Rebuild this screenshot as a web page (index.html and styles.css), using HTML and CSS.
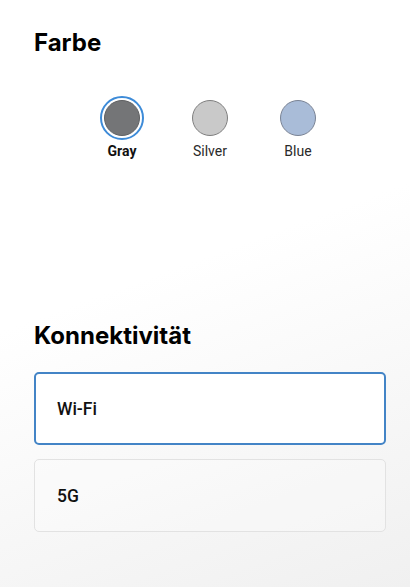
FILE: index.html
```html
<!DOCTYPE html>
<html lang="de">
<head>
<meta charset="utf-8">
<title>Farbe & Konnektivität</title>
<link rel="stylesheet" href="styles.css">
</head>
<body>
<main class="page">
  <section class="section color-section">
    <h2 class="title">Farbe</h2>
    <div class="swatches">
      <div class="swatch is-selected">
        <span class="ring"><span class="dot dot-gray"></span></span>
        <span class="label">Gray</span>
      </div>
      <div class="swatch">
        <span class="ring"><span class="dot dot-silver"></span></span>
        <span class="label">Silver</span>
      </div>
      <div class="swatch">
        <span class="ring"><span class="dot dot-blue"></span></span>
        <span class="label">Blue</span>
      </div>
    </div>
  </section>
  <section class="section conn-section">
    <h2 class="title">Konnektivität</h2>
    <div class="options">
      <div class="option is-selected">Wi-Fi</div>
      <div class="option">5G</div>
    </div>
  </section>
</main>
</body>
</html>
```
FILE: styles.css
```css
html, body {
  margin: 0;
  height: 100%;
}
body {
  background: linear-gradient(160deg, #ffffff 0%, #ffffff 45%, #f0f0f0 100%);
  font-family: Inter, "Noto Sans", sans-serif;
  color: #000;
}
.page {
  padding: 28px 24px 0 34px;
}
.title {
  margin: 0;
  font-size: 24px;
  line-height: 29px;
  font-weight: 700;
  letter-spacing: 0;
  color: #000;
}
.swatches {
  display: flex;
  justify-content: center;
  margin-top: 39px;
}
.swatch {
  width: 88px;
  display: flex;
  flex-direction: column;
  align-items: center;
}
.ring {
  width: 40px;
  height: 40px;
  border: 2px solid transparent;
  border-radius: 50%;
  display: flex;
  align-items: center;
  justify-content: center;
}
.swatch.is-selected .ring {
  border-color: #3d8bd8;
}
.dot {
  width: 34px;
  height: 34px;
  border-radius: 50%;
  border: 1px solid #7c7c7c;
}
.dot-gray { background: #747577; border-color: #5f6062; }
.dot-silver { background: #c9c9c9; border-color: #7f7f7f; }
.dot-blue { background: #a9bcd8; border-color: #7a8394; }
.label {
  margin-top: 3px;
  font-family: Roboto, "Noto Sans", sans-serif;
  font-size: 14px;
  line-height: 17px;
  color: #2a2a2a;
  font-weight: 400;
}
.swatch.is-selected .label {
  font-weight: 700;
  color: #111;
}
.conn-section {
  margin-top: 161px;
}
.options {
  margin-top: 22px;
  display: flex;
  flex-direction: column;
  gap: 14px;
}
.option {
  height: 73px;
  box-sizing: border-box;
  border: 1px solid #e2e2e2;
  border-radius: 5px;
  padding: 0 22px;
  display: flex;
  align-items: center;
  font-family: Roboto, "Noto Sans", sans-serif;
  font-size: 17.5px;
  font-weight: 500;
  color: #111;
  background: rgba(255,255,255,0.25);
}
.option.is-selected {
  border: 2px solid #4384c6;
  padding: 0 21px;
  background: #fff;
}
```
